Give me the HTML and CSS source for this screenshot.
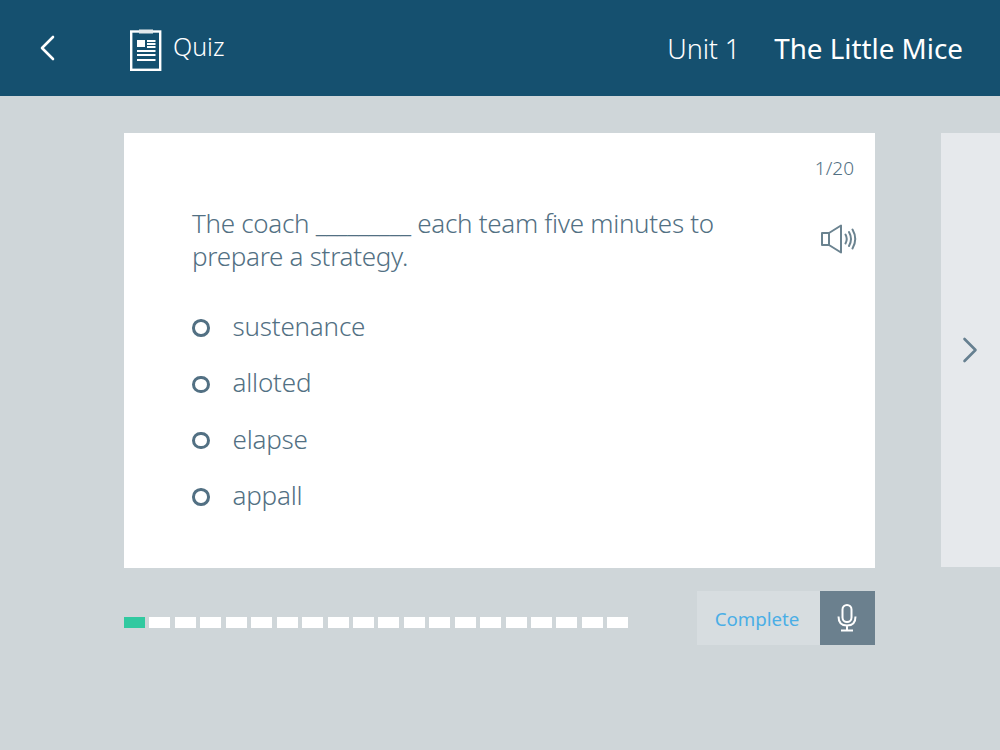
FILE: index.html
```html
<!DOCTYPE html>
<html lang="en">

<head>
    <meta charset="UTF-8">
    <meta name="viewport" content="width=device-width, initial-scale=1.0">
    <title>Quiz</title>
    <link rel="stylesheet" href="styles.css">
</head>

<body>
    <!-- Top bar -->
    <header class="topBar">
        <svg class="backIcon" width="18" height="28" viewBox="0 0 18 28">
            <path d="M15 3 L4 14 L15 25" fill="none" stroke="#fff" stroke-width="2.6" stroke-linecap="round" stroke-linejoin="round" />
        </svg>
        <svg class="quizIcon" width="32" height="42" viewBox="0 0 32 42">
            <rect x="1.2" y="2.5" width="29" height="38.3" fill="none" stroke="#fff" stroke-width="2.4" />
            <rect x="9" y="0.5" width="14" height="4" fill="#e3e9ec" />
            <rect x="7" y="11" width="8" height="7" fill="#fff" />
            <path d="M17 12H25.500M17 15H25.500M17 18H25.500M7 22H25.500M7 26H25.500M7 31H25.500" stroke="#fff" stroke-width="2" />
        </svg>
        <span class="quizLabel">Quiz</span>
        <span class="unitLabel">Unit 1</span>
        <span class="storyTitle">The Little Mice</span>
    </header>

    <main class="content">
        <div class="cards">
            <section class="questionCard">
                <div class="counter">1/20</div>
                <div class="questionRow">
                    <p class="questionText">The coach _________ each team five minutes to prepare a strategy.</p>
                    <svg class="speakerIcon" width="36" height="30" viewBox="0 0 36 30">
                        <path d="M1 9H8V21H1ZM8 9L20 1.5V28.5L8 21" fill="none" stroke="#6b8390" stroke-width="2" stroke-linejoin="round" />
                        <path d="M24.5 10.5Q27 15 24.5 19.5M28 8Q32 15 28 22M31.5 5.5Q37 15 31.5 24.5" fill="none" stroke="#6b8390" stroke-width="2" stroke-linecap="round" />
                    </svg>
                </div>
                <ul class="answers">
                    <li class="answer"><span class="radio"></span>sustenance</li>
                    <li class="answer"><span class="radio"></span>alloted</li>
                    <li class="answer"><span class="radio"></span>elapse</li>
                    <li class="answer"><span class="radio"></span>appall</li>
                </ul>
            </section>
            <aside class="nextCard">
                <svg width="16" height="26" viewBox="0 0 16 26">
                    <path d="M2.5 2L13.5 13L2.5 24" fill="none" stroke="#668090" stroke-width="2.6" stroke-linecap="round" stroke-linejoin="round" />
                </svg>
            </aside>
        </div>

        <div class="footerRow">
            <div class="progress">
                <span class="step current"></span><span class="step"></span><span class="step"></span><span class="step"></span><span class="step"></span>
                <span class="step"></span><span class="step"></span><span class="step"></span><span class="step"></span><span class="step"></span>
                <span class="step"></span><span class="step"></span><span class="step"></span><span class="step"></span><span class="step"></span>
                <span class="step"></span><span class="step"></span><span class="step"></span><span class="step"></span><span class="step"></span>
            </div>
            <div class="actions">
                <button class="completeButton">Complete</button>
                <button class="micButton">
                    <svg width="20" height="28" viewBox="0 0 20 28">
                        <rect x="5.5" y="1" width="9" height="17" rx="4.5" fill="none" stroke="#fff" stroke-width="2" />
                        <path d="M1.5 12.5C1.5 18.5 5 21.5 10 21.5C15 21.5 18.5 18.5 18.5 12.5M10 21.5V26.5M4 26.5H16" fill="none" stroke="#fff" stroke-width="2" />
                    </svg>
                </button>
            </div>
        </div>
    </main>
</body>

</html>
```

FILE: styles.css
```css
body {
    margin: 0;
    height: 750px;
    overflow: hidden;
    background: #cfd6d9;
    font-family: "Noto Sans", "Open Sans", sans-serif;
    font-weight: 300;
    color: #527083;
}

.topBar {
    height: 96px;
    background: #15506f;
    color: #fff;
    display: flex;
    align-items: center;
    box-sizing: border-box;
    padding: 0 37px 0 38px;
}

.backIcon {
    margin-right: 74px;
}

.quizIcon {
    margin-right: 11px;
    margin-top: 4px;
}

.quizLabel {
    font-size: 25px;
    margin-top: -4px;
}

.unitLabel {
    margin-left: auto;
    font-size: 27px;
    letter-spacing: -0.1px;
}

.storyTitle {
    margin-left: 34px;
    font-size: 27.8px;
    font-weight: 400;
}

.content {
    padding: 37px 0 0 124px;
}

.cards {
    display: flex;
    gap: 66px;
}

.questionCard {
    width: 751px;
    height: 435px;
    flex: none;
    box-sizing: border-box;
    background: #fff;
    padding: 21px 21px 0 68px;
}

.counter {
    text-align: right;
    font-size: 19px;
    line-height: 28px;
}

.questionRow {
    display: flex;
    justify-content: space-between;
    margin-top: 25px;
}

.questionText {
    margin: 0;
    width: 560px;
    font-size: 26px;
    letter-spacing: -0.3px;
    line-height: 33px;
}

.speakerIcon {
    margin: 17px -3px 0 0;
}

.answers {
    list-style: none;
    margin: 25px 0 0;
    padding: 0;
}

.answer {
    display: flex;
    align-items: center;
    height: 56.3px;
    font-size: 26px;
    letter-spacing: -0.2px;
}

.radio {
    width: 11.5px;
    height: 11.5px;
    border: 3.75px solid #527083;
    border-radius: 50%;
    margin: 4px 23px 0 0;
}

.nextCard {
    flex: 1;
    height: 434px;
    background: #e6e9ec;
    display: flex;
    align-items: center;
    padding-left: 21px;
}

.footerRow {
    width: 751px;
    display: flex;
    justify-content: space-between;
    align-items: center;
    margin-top: 23px;
}

.progress {
    display: flex;
    gap: 4.45px;
    margin-top: 9px;
}

.step {
    width: 21px;
    height: 11px;
    background: #fff;
}

.step.current {
    background: #31c9a0;
}

.actions {
    display: flex;
}

.completeButton {
    width: 123px;
    height: 54px;
    border: none;
    padding: 0 3px 0 0;
    background: #d7dde0;
    color: #4aaee6;
    font-family: inherit;
    font-size: 18.7px;
    font-weight: 400;
}

.micButton {
    width: 55px;
    height: 54px;
    border: none;
    padding: 0 1px 0 0;
    background: #6b808e;
    display: flex;
    align-items: center;
    justify-content: center;
}
```
